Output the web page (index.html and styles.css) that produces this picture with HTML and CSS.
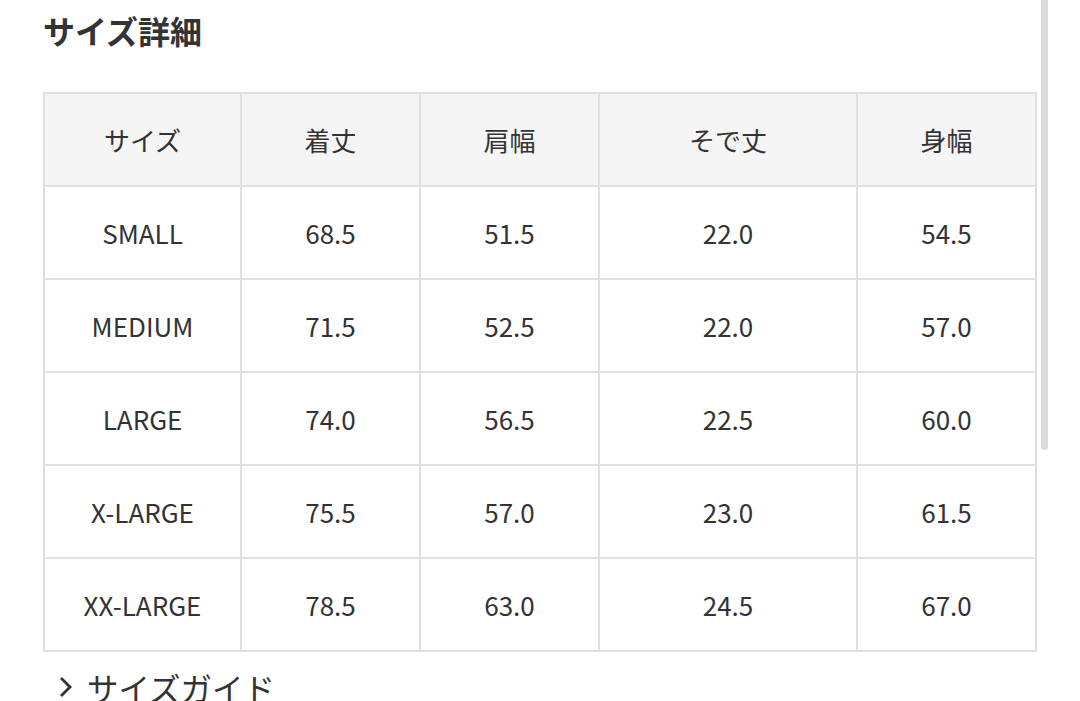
FILE: index.html
```html
<!DOCTYPE html>
<html lang="ja">
<head>
<meta charset="utf-8">
<link rel="stylesheet" href="styles.css">
</head>
<body>
<div class="page">
  <h2 class="title">サイズ詳細</h2>
  <table class="size-table">
    <colgroup>
      <col class="c1"><col class="c2"><col class="c3"><col class="c4"><col class="c5">
    </colgroup>
    <thead>
      <tr><th>サイズ</th><th>着丈</th><th>肩幅</th><th>そで丈</th><th>身幅</th></tr>
    </thead>
    <tbody>
      <tr><td>SMALL</td><td>68.5</td><td>51.5</td><td>22.0</td><td>54.5</td></tr>
      <tr><td>MEDIUM</td><td>71.5</td><td>52.5</td><td>22.0</td><td>57.0</td></tr>
      <tr><td>LARGE</td><td>74.0</td><td>56.5</td><td>22.5</td><td>60.0</td></tr>
      <tr><td>X-LARGE</td><td>75.5</td><td>57.0</td><td>23.0</td><td>61.5</td></tr>
      <tr><td>XX-LARGE</td><td>78.5</td><td>63.0</td><td>24.5</td><td>67.0</td></tr>
    </tbody>
  </table>
  <a class="guide" href="#">
    <svg class="chev" width="16" height="22" viewBox="0 0 16 22"><path d="M4 2 L13 11 L4 20" fill="none" stroke="#333" stroke-width="2.8"/></svg>
    <span>サイズガイド</span>
  </a>
</div>
<div class="scrollbar"></div>
</body>
</html>
```

FILE: styles.css
```css
html, body {
  margin: 0;
  padding: 0;
  background: #fff;
  overflow: hidden;
}
body {
  font-family: "Noto Sans CJK JP", "Noto Sans", sans-serif;
  color: #333;
  width: 1080px;
  height: 701px;
  position: relative;
}
.page {
  padding: 0 43px;
}
.title {
  margin: 0;
  padding-top: 8px;
  height: 92px;
  box-sizing: border-box;
  font-size: 32px;
  font-weight: 700;
  line-height: 44px;
  color: #333;
}
.size-table {
  border-collapse: collapse;
  width: 994px;
  table-layout: fixed;
}
.c1 { width: 197px; }
.c2 { width: 179px; }
.c3 { width: 179px; }
.c4 { width: 258px; }
.c5 { width: 179px; }
.size-table th,
.size-table td {
  border: 2px solid #e0e0e0;
  height: 91px;
  padding: 0;
  text-align: center;
  vertical-align: middle;
  font-size: 26px;
  font-weight: 400;
  color: #333;
}
.size-table th {
  background: #f5f5f5;
}
.guide {
  display: flex;
  align-items: center;
  gap: 14px;
  margin-top: 17px;
  margin-left: 14px;
  font-size: 31.5px;
  font-weight: 400;
  color: #333;
  text-decoration: none;
  line-height: 36px;
}
.scrollbar {
  position: absolute;
  top: 0;
  left: 1041px;
  width: 7px;
  height: 450px;
  background: #dcdcdc;
  border-radius: 0 0 3px 3px;
}
```
